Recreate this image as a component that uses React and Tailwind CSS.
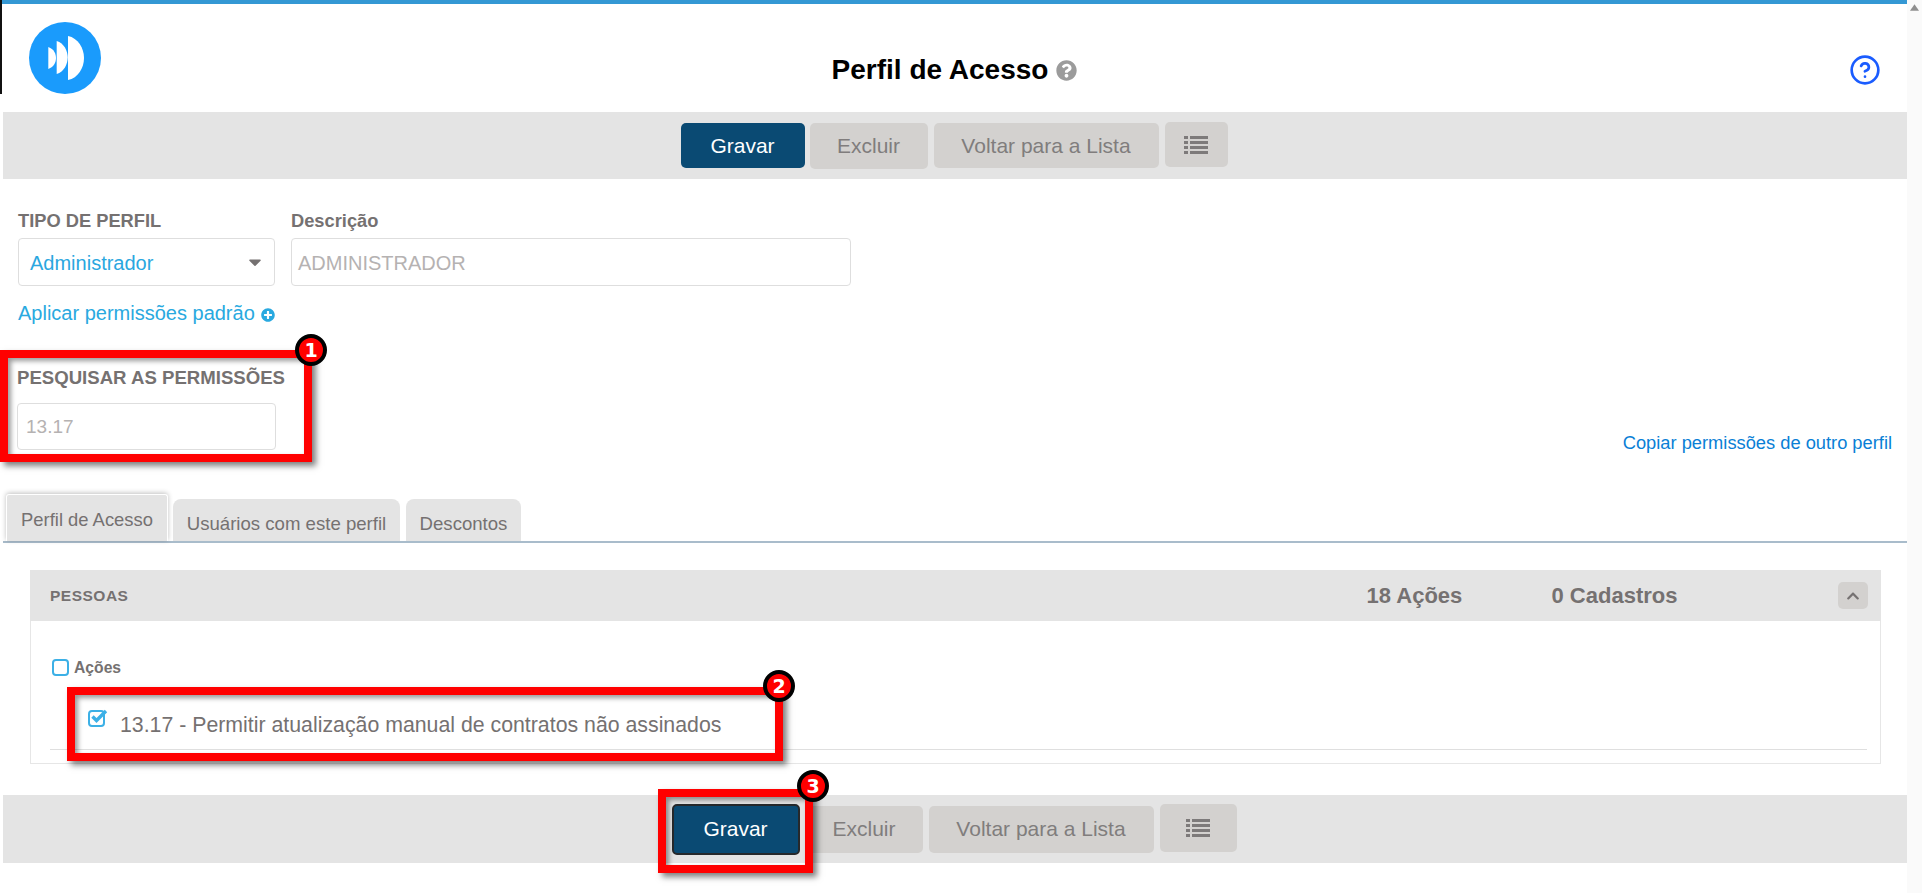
import { CircleHelp } from 'lucide-react';
import { FaCaretDown, FaChevronUp, FaPlusCircle, FaQuestionCircle } from 'react-icons/fa';

const Logo = () => (
  <svg viewBox="0 0 72 72" className="w-[72px] h-[72px]">
    <circle cx="36" cy="36" r="36" fill="#1a9bfc" />
    <path d="M19.3 25C25 27 27 32 27 36C27 40 25 45 19.3 47Z" fill="#fff" />
    <path d="M27.7 19C35 21 38.7 29 38.7 35.5C38.7 42 35 50 27.7 52Z" fill="#fff" />
    <path d="M39 14C49 16 55 26 55 36C55 46 49 56 39 58Z" fill="#fff" />
  </svg>
);

const ListIcon = () => (
  <svg viewBox="0 0 24 18" className="w-[24px] h-[18px]" fill="#7d7a7a">
    <rect x="0" y="0" width="4" height="3" />
    <rect x="6" y="0" width="18" height="3" />
    <rect x="0" y="5" width="4" height="3" />
    <rect x="6" y="5" width="18" height="3" />
    <rect x="0" y="10" width="4" height="3" />
    <rect x="6" y="10" width="18" height="3" />
    <rect x="0" y="15" width="4" height="3" />
    <rect x="6" y="15" width="18" height="3" />
  </svg>
);

const GrayButton = ({ className = '', children }) => (
  <button className={`flex items-center justify-center rounded-[5px] bg-[#d3d1cf] text-[21px] text-[#807d7d] ${className}`}>
    {children}
  </button>
);

const Toolbar = () => (
  <div className="flex items-center justify-center h-[67px] ml-[3px] pr-[2px] bg-[#e4e4e4]">
    <button className="w-[124px] h-[45px] rounded-[5px] bg-[#0a4a73] text-[21px] text-white">Gravar</button>
    <GrayButton className="w-[118px] h-[46px] ml-[5px]">Excluir</GrayButton>
    <GrayButton className="w-[225px] h-[45px] ml-[6px]">Voltar para a Lista</GrayButton>
    <GrayButton className="w-[63px] h-[45px] ml-[6px] mb-[2px]"><ListIcon /></GrayButton>
  </div>
);

const BottomToolbar = () => (
  <div className="flex items-center justify-center h-[68px] mt-[31px] ml-[3px] pr-[2px] bg-[#e4e4e4]">
    <button className="w-[128px] h-[51px] rounded-[5px] border-2 border-[#26292c] bg-[#0a4a73] text-[21px] text-white">Gravar</button>
    <GrayButton className="w-[117px] h-[47px] ml-[6px]">Excluir</GrayButton>
    <GrayButton className="w-[225px] h-[47px] ml-[6px]">Voltar para a Lista</GrayButton>
    <GrayButton className="w-[77px] h-[48px] ml-[6px] mb-[2px]"><ListIcon /></GrayButton>
  </div>
);

const Highlight = ({ className }) => (
  <div className={`absolute border-[8px] border-[#ff0000] shadow-[4px_4px_6px_rgba(0,0,0,0.5),inset_3px_3px_5px_rgba(0,0,0,0.4)] ${className}`} />
);

const Badge = ({ className, children }) => (
  <div className={`absolute flex items-center justify-center w-[32px] h-[32px] rounded-full border-[4px] border-black bg-[#ff0000] font-['DejaVu_Sans',sans-serif] text-[19px] font-bold text-white ${className}`}>
    {children}
  </div>
);

export default function App() {
  return (
    <div className="relative flex h-[893px] overflow-hidden bg-white font-['Liberation_Sans',Arial,sans-serif] text-[#757171]">
      <div className="absolute left-0 top-0 w-[2px] h-[94px] bg-[#111]" />

      <main className="w-[1907px] shrink-0">
        <div className="h-[4px] ml-[2px] bg-[#3498d4]" />

        <header className="grid grid-cols-[1fr_auto_1fr] items-start h-[108px] ml-[29px]">
          <div className="mt-[18px]"><Logo /></div>
          <div className="flex items-center gap-[8px] mt-[49px] -ml-[27px]">
            <h1 className="text-[28px] leading-[34px] font-bold text-black">Perfil de Acesso</h1>
            <FaQuestionCircle size={21} className="text-[#9b9b9b]" />
          </div>
          <div className="flex justify-end mt-[50px] mr-[26px]">
            <CircleHelp size={32} strokeWidth={2} className="text-[#1a5cff]" />
          </div>
        </header>

        <Toolbar />

        <section className="pt-[32px] pl-[18px] pr-[15px]">
          <div className="flex gap-4">
            <div className="w-[257px]">
              <label className="block h-[27px] text-[18.3px] leading-[20px] font-bold">TIPO DE PERFIL</label>
              <div className="flex items-center justify-between h-[48px] pl-[11px] pr-[9px] rounded-[4px] border border-[#dedede] text-[20px] text-[#2aa7e0]">
                <span className="mt-[1px]">Administrador</span>
                <FaCaretDown size={20} className="text-[#757171]" />
              </div>
            </div>
            <div className="w-[560px]">
              <label className="block h-[27px] text-[18.3px] leading-[20px] font-bold">Descrição</label>
              <div className="flex items-center h-[48px] pl-[6px] rounded-[4px] border border-[#dedede] text-[20px] text-[#b5b2b2]">
                <span className="mt-[1px]">ADMINISTRADOR</span>
              </div>
            </div>
          </div>

          <a className="flex items-center gap-[6px] mt-[13px] text-[20px] leading-[28px] text-[#29a9e0]">
            Aplicar permissões padrão
            <FaPlusCircle size={14} className="mt-[3px]" />
          </a>

          <div className="flex items-end justify-between mt-[39px]">
            <div className="pb-[3px] -ml-px">
              <label className="block h-[36px] mt-[1px] text-[18.6px] leading-[22px] font-bold">PESQUISAR AS PERMISSÕES</label>
              <div className="flex items-center w-[259px] h-[47px] pl-[8px] rounded-[4px] border border-[#dedede] text-[19px] text-[#b5b2b2]">
                <span className="mt-[1px]">13.17</span>
              </div>
            </div>
            <a className="text-[18.3px] leading-[20px] text-[#0a7fd6]">Copiar permissões de outro perfil</a>
          </div>
        </section>

        <nav className="flex items-end h-[49px] mt-[41px] ml-[3px] pl-[3px] border-b-2 border-[#a9bccb]">
          <div className="w-[162px] h-[47px] pt-[12px] text-center rounded-t-[3px] border border-b-0 border-white bg-[#e4e4e4] text-[18.4px] leading-[26px] shadow-[0_-1px_5px_rgba(0,0,0,0.25)]">
            Perfil de Acesso
          </div>
          <div className="w-[227px] h-[42px] ml-[5px] pt-[12px] text-center rounded-t-[8px] bg-[#e4e4e4] text-[18.6px] leading-[26px]">
            Usuários com este perfil
          </div>
          <div className="w-[115px] h-[42px] ml-[6px] pt-[12px] text-center rounded-t-[8px] bg-[#e4e4e4] text-[18.6px] leading-[26px]">
            Descontos
          </div>
        </nav>

        <section className="w-[1851px] mt-[27px] ml-[30px]">
          <div className="flex items-center h-[51px] pl-[20px] bg-[#e4e4e4] font-bold">
            <span className="flex-1 text-[15.5px] tracking-[0.5px]">PESSOAS</span>
            <span className="w-[185px] text-[22px]">18 Ações</span>
            <span className="w-[286.5px] text-[22px]">0 Cadastros</span>
            <button className="flex items-center justify-center w-[30px] h-[27px] mr-[13px] rounded-[5px] bg-[#d3d1cf]">
              <FaChevronUp size={14} />
            </button>
          </div>

          <div className="h-[143px] pt-[38px] border-x border-b border-[#e6e6e6]">
            <div className="flex items-center gap-[5px] h-[17px] pl-[21px]">
              <span className="w-[17px] h-[17px] rounded-[4px] border-2 border-[#3cb0e6]" />
              <span className="text-[15.7px] font-bold">Ações</span>
            </div>
            <div className="flex h-[74px] ml-[19px] mr-[13px] pl-[38px] border-b border-[#dfdfdf]">
              <svg viewBox="0 0 20 18" className="w-[20px] h-[18px] mt-[33px] shrink-0">
                <rect x="1" y="2" width="15" height="15" rx="3" fill="none" stroke="#3cb0e6" strokeWidth="2" />
                <path d="M4.5 7.5L8.5 11.5L18 2" fill="none" stroke="#3cb0e6" strokeWidth="3.4" />
              </svg>
              <span className="ml-[12px] mt-[34px] text-[21.3px] leading-[30px]">
                13.17 - Permitir atualização manual de contratos não assinados
              </span>
            </div>
          </div>
        </section>

        <BottomToolbar />
      </main>

      <aside className="flex-1 bg-[#fafafa]">
        <svg viewBox="0 0 10 7" className="w-[9px] h-[7px] mt-[4px] ml-[3px]">
          <path d="M5 0L10 7H0Z" fill="#8f8f8f" />
        </svg>
      </aside>

      <Highlight className="left-0 top-[350px] w-[312px] h-[112px]" />
      <Badge className="left-[295px] top-[334px]">1</Badge>
      <Highlight className="left-[67px] top-[687px] w-[716px] h-[74px]" />
      <Badge className="left-[763px] top-[670px]">2</Badge>
      <Highlight className="left-[658px] top-[789px] w-[155px] h-[84px]" />
      <Badge className="left-[797px] top-[770px]">3</Badge>
    </div>
  );
}
